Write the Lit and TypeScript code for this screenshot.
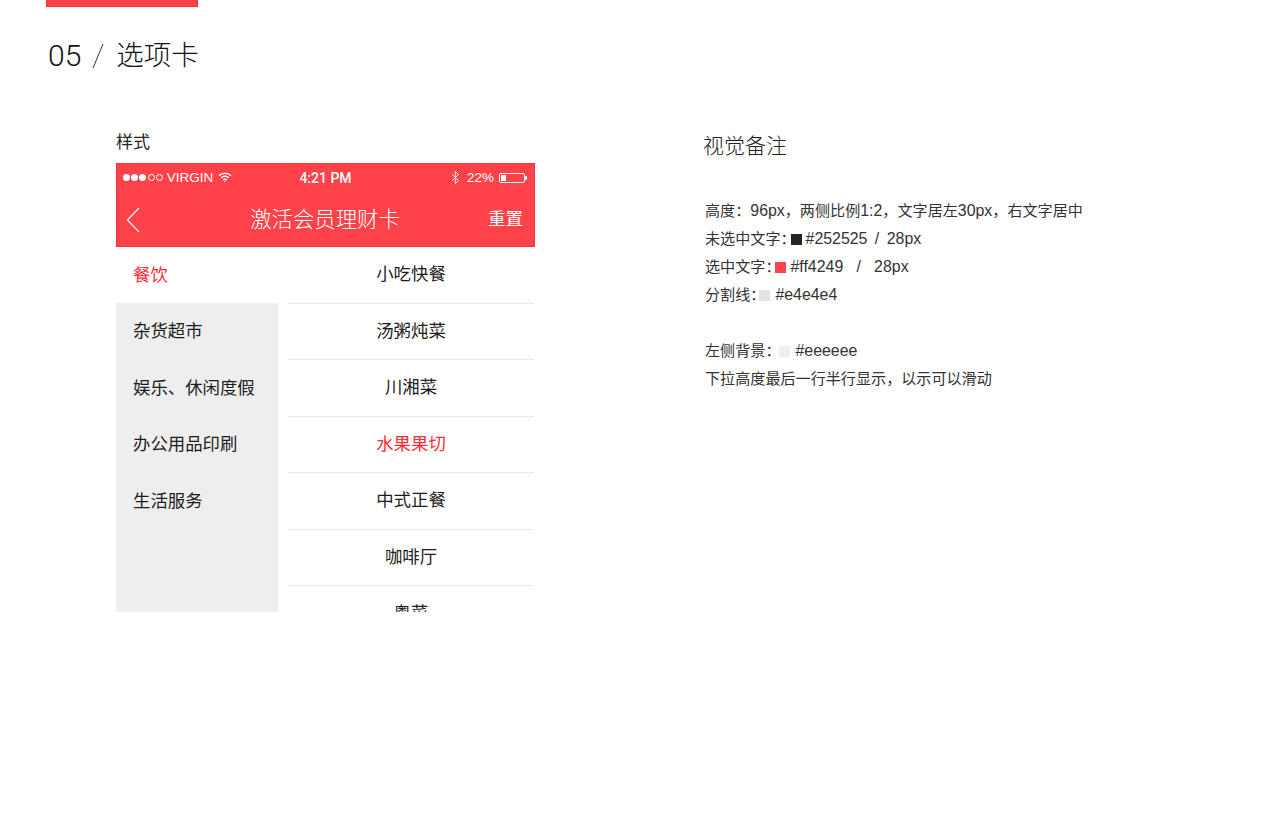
import { LitElement, html, css, svg } from "lit";
import { customElement } from "lit/decorators.js";

const LEFT = ["餐饮", "杂货超市", "娱乐、休闲度假", "办公用品印刷", "生活服务"];
const RIGHT = ["小吃快餐", "汤粥炖菜", "川湘菜", "水果果切", "中式正餐", "咖啡厅", "粤菜"];

const wifi = svg`<svg class="wifi" width="14" height="11" viewBox="0 0 14 11" fill="none" stroke="#fff" stroke-width="1.4">
  <path d="M1 3.6C4.5 .6 9.5 .6 13 3.6"/><path d="M3.2 5.9C5.4 4.1 8.6 4.1 10.8 5.9"/><path d="M5.2 8C6.2 7.2 7.8 7.2 8.8 8"/><circle cx="7" cy="9.6" r=".7" fill="#fff" stroke="none"/></svg>`;
const bt = svg`<svg width="9" height="15" viewBox="0 0 9 15" fill="none" stroke="#f4e6e8" stroke-width="1"><path d="M1 4.2 7.4 10.4 4.3 13.6V1.4L7.4 4.6 1 10.8"/></svg>`;
const back = svg`<svg width="14" height="26" viewBox="0 0 14 26" fill="none" stroke="#fff" stroke-width="1.2"><path d="M13 1 1.4 13 13 25"/></svg>`;

@customElement("app-root")
export class AppRoot extends LitElement {
  static styles = css`
    :host { display: block; width: 1280px; height: 815px; overflow: hidden; background: #fff; color: #252525;
      font-family: "Liberation Sans", "Noto Sans CJK SC", sans-serif; }
    .tab { width: 152px; height: 7px; margin-left: 46px; background: #ff4249; box-sizing: border-box; border: 1px solid #f5333c; border-top: 0; }
    .title { margin: 29px 0 0 48px; height: 40px; display: flex; align-items: center; font-size: 27.5px; line-height: 40px; font-weight: 300; color: #111; }
    .title .num { font-family: Roboto, "Liberation Sans", sans-serif; font-weight: 300; font-size: 30px; }
    .title .slash { width: 14px; height: 26px; margin: 0 11px 0 10px; flex: none; }
    .main { display: flex; margin: 55px 0 0 116px; }
    .left { width: 419px; }
    .cap { font-size: 17px; line-height: 24px; height: 32px; margin-top: 0; }
    .phone { width: 419px; display: flex; flex-direction: column; }
    .head { height: 84px; background: #ff4249; box-sizing: border-box; border: 1px solid #f5333c; color: #fff; display: flex; flex-direction: column; }
    .status { height: 27px; display: flex; align-items: center; padding: 0 9px 0 6px; font-size: 13.5px; }
    .dots { display: flex; gap: 1.2px; margin-right: 4px; }
    .dot { width: 7px; height: 7px; border-radius: 50%; background: #fff; box-sizing: border-box; }
    .dot.off { background: none; border: 1px solid #fff; }
    .wifi { margin-left: 5px; }
    .s-l, .s-r { flex: 1; display: flex; align-items: center; }
    .s-r { justify-content: flex-end; }
    .time { font-family: Roboto, "Liberation Sans", sans-serif; font-weight: 500; font-size: 14px; margin-left: 3px; }
    .pct { margin: 0 5px 0 7px; }
    .batt { width: 26px; height: 10px; box-sizing: border-box; border: 1px solid #fff; border-radius: 2px; padding: 1px; position: relative; }
    .batt i { display: block; width: 5px; height: 100%; background: #fff; }
    .batt::after { content: ""; position: absolute; right: -3px; top: 2px; width: 2px; height: 4px; background: #fff; border-radius: 0 1px 1px 0; }
    .nav { flex: 1; display: flex; align-items: center; padding: 0 11px 3px 9px; }
    .nav .back { width: 61px; display: flex; margin-top: 5px; }
    .nav .t { flex: 1; text-align: center; font-size: 21.4px; font-weight: 300; white-space: nowrap; }
    .nav .r { width: 60px; text-align: right; font-size: 17.5px; }
    .body { height: 365px; overflow: hidden; display: flex; font-size: 17.4px; }
    .cats { width: 162px; margin-right: 10px; background: #eee; flex: none; }
    .cat { height: 56.4px; line-height: 56.4px; padding-left: 17px; color: #1c1c1c; }
    .cat.on { background: #fff; color: #fb2c36; }
    .items { flex: 1; margin-right: 1px; }
    .item { height: 56.5px; box-sizing: border-box; line-height: 55px; text-align: center; color: #1c1c1c; border-bottom: 1px solid #e9e9e9; }
    .item.on { color: #ff2d36; }
    .notes { margin-left: 168px; font-size: 15.1px; color: #333; }
    .notes h2 { margin: 0 0 36px; font-size: 21px; line-height: 30px; font-weight: 300; color: #222; height: 30px; }
    .line { height: 28px; line-height: 28px; padding-left: 2px; display: flex; align-items: center; white-space: pre; }
    .sw { width: 11px; height: 11px; margin: 0 4px 0 -5px; flex: none; }
    .sw.narrow { margin-left: -6px; margin-right: 5px; }
    .sw.wide { margin-left: -1px; margin-right: 5px; }
    .v { font-size: 15.9px; }
    .v.tight { word-spacing: -0.7px; }
    .gap { height: 28px; }
  `;

  render() {
    return html`
      <div class="tab"></div>
      <div class="title"><span class="num">05</span>
        <svg class="slash" viewBox="0 0 14 26" fill="none" stroke="#333" stroke-width="1"><path d="M12 1 2 25"/></svg>
        <span>选项卡</span></div>
      <div class="main">
        <section class="left">
          <div class="cap">样式</div>
          <div class="phone">
            <div class="head">
              <div class="status">
                <div class="s-l"><span class="dots"><i class="dot"></i><i class="dot"></i><i class="dot"></i><i class="dot off"></i><i class="dot off"></i></span>VIRGIN${wifi}</div>
                <div class="time">4:21 PM</div>
                <div class="s-r">${bt}<span class="pct">22%</span><span class="batt"><i></i></span></div>
              </div>
              <div class="nav"><span class="back">${back}</span><span class="t">激活会员理财卡</span><span class="r">重置</span></div>
            </div>
            <div class="body">
              <div class="cats">${LEFT.map((t, i) => html`<div class="cat ${i === 0 ? "on" : ""}">${t}</div>`)}</div>
              <div class="items">${RIGHT.map((t, i) => html`<div class="item ${i === 3 ? "on" : ""}">${t}</div>`)}</div>
            </div>
          </div>
        </section>
        <section class="notes">
          <h2>视觉备注</h2>
          <div class="line">高度：<span class="v">96px</span>，两侧比例<span class="v">1:2</span>，文字居左<span class="v">30px</span>，右文字居中</div>
          <div class="line">未选中文字：<span class="sw" style="background:#252525"></span><span class="v tight">#252525  /  28px</span></div>
          <div class="line">选中文字：<span class="sw" style="background:#ff4249"></span><span class="v">#ff4249   /   28px</span></div>
          <div class="line">分割线：<span class="sw narrow" style="background:#e4e4e4"></span><span class="v">#e4e4e4</span></div>
          <div class="gap"></div>
          <div class="line">左侧背景：<span class="sw wide" style="background:#eeeeee"></span><span class="v">#eeeeee</span></div>
          <div class="line">下拉高度最后一行半行显示，以示可以滑动</div>
        </section>
      </div>`;
  }
}
